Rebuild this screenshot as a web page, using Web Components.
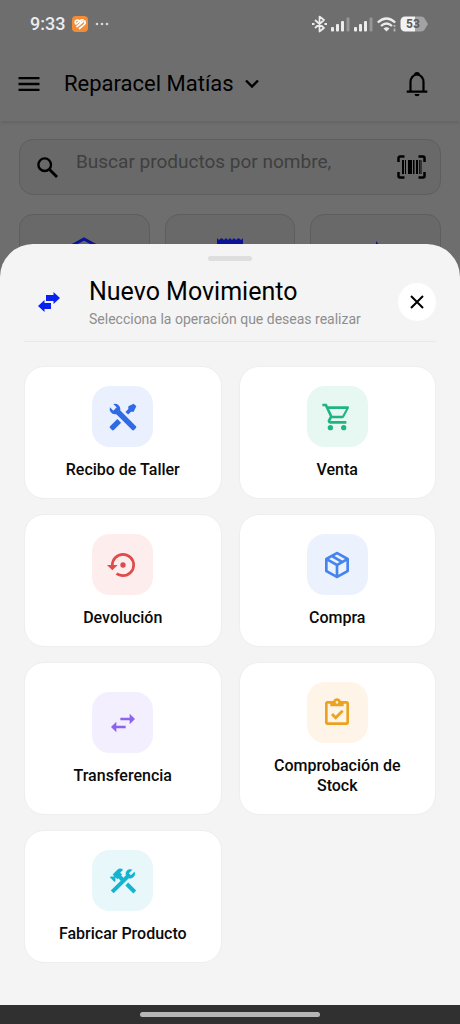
<!DOCTYPE html>
<html lang="es">
<head>
<meta charset="utf-8">
<meta name="viewport" content="width=device-width, initial-scale=1">
<title>Nuevo Movimiento</title>
<style>
html,body{margin:0;height:100%;background:#6e6e6e}
body{font-family:Roboto,"Liberation Sans",sans-serif;color:#000;overflow:hidden}
</style>
</head>
<body>
<movement-app></movement-app>
<script>
const define = (name, markup) => {
  const tpl = document.createElement('template');
  tpl.innerHTML = markup;
  customElements.define(name, class extends HTMLElement {
    constructor() {
      super();
      this.attachShadow({mode: 'open'}).appendChild(tpl.content.cloneNode(true));
    }
  });
};

/* System status bar */
define('status-bar', `
<style>
:host{display:flex;align-items:center;justify-content:space-between;height:46px;padding:2px 32px 0 30px;box-sizing:border-box;color:#ececec}
div{display:flex;align-items:center}
.l{gap:7px}.r{gap:4px}
time{font-size:18px;line-height:20px;font-weight:500}
svg{display:block}
.bat{position:relative;display:block}
.bat span{position:absolute;inset:0;width:26px;text-align:center;font-size:12px;line-height:16px;font-weight:700;color:#5a5a5a}
</style>
<div class="l">
  <time>9:33</time>
  <svg width="16" height="16" viewBox="0 0 16 16"><rect width="16" height="16" rx="4" fill="#f28c36"/><g fill="none" stroke="#fff" stroke-width="1.700" stroke-linecap="round"><path d="M8.500 6L6.500 4.200Q4.500 3.500 3.300 5.300Q2.800 7 4 8L8 4.800Q9.500 3.500 11 3.800M5 10.500L11 5.500M7.500 12.500L12.500 8.300Q13.700 6.500 12.800 5"/></g></svg>
  <svg width="14" height="4" viewBox="0 0 14 4" fill="#d8d8d8"><circle cx="2" cy="2" r="1.300"/><circle cx="7" cy="2" r="1.300"/><circle cx="12" cy="2" r="1.300"/></svg>
</div>
<div class="r">
  <svg width="15" height="18" viewBox="0 0 15 18" fill="none" stroke="#ececec" stroke-width="1.700" stroke-linejoin="round"><path d="M3 5l9 8-4.500 3.500v-15L12 5l-9 8"/><path d="M0 9h2.500M12.500 9H15" stroke-width="2"/></svg>
  <svg width="19" height="15" viewBox="0 0 19 15" fill="#ececec"><rect y="10" width="3" height="4.500" rx="1"/><rect x="5" y="7" width="3" height="7.500" rx="1"/><rect x="10" y="4" width="3" height="10.500" rx="1"/><rect x="15.500" y="0.500" width="3" height="14" rx="1" fill="#969696"/></svg>
  <svg width="19" height="15" viewBox="0 0 19 15" fill="#ececec"><rect y="10" width="3" height="4.500" rx="1"/><rect x="5" y="7" width="3" height="7.500" rx="1"/><rect x="10" y="4" width="3" height="10.500" rx="1"/><rect x="15.500" y="0.500" width="3" height="14" rx="1" fill="#969696"/></svg>
  <svg width="19" height="15" viewBox="0 0 19 15" fill="none" stroke="#ececec" stroke-width="2.300"><path d="M.8 5.500Q9.500-2.500 18.200 5.500M4 9Q9.500 4 15 9"/><path d="M6.500 11.500Q9.500 9 12.500 11.500L9.500 14.500z" fill="#ececec" stroke="none"/><path d="M17.500 8v2M17.500 11.500v3" stroke="#b4b4b4" stroke-width="1.800"/></svg>
  <div class="bat"><svg width="28" height="16" viewBox="0 0 28 16"><path d="M5 .5h10v15H5a4.500 4.500 0 0 1-4.500-4.500V5A4.500 4.500 0 0 1 5 .5z" fill="#f2f2f2"/><path d="M15 .5h6q3 0 4.200 3L28 8l-2.800 4.500q-1.200 3-4.200 3h-6z" fill="#a2a2a2"/></svg><span>53</span></div>
</div>`);

/* Title bar with menu, store picker and alerts */
define('app-bar', `
<style>
:host{display:flex;align-items:center;height:75px;box-sizing:border-box;padding:0 32px 0 15px;background:#6e6e6e;box-shadow:0 3px 3px -1px #646464}
button{display:flex;align-items:center;border:0;background:none;padding:0;font:inherit;color:#000}
.store{font-size:22px;line-height:28px;gap:11px;margin-left:21px}
.bell{margin-left:auto}
svg{display:block}
</style>
<button aria-label="Menú"><svg width="28" height="28" viewBox="0 0 24 24"><path d="M3 6h18v2H3zm0 5h18v2H3zm0 5h18v2H3z"/></svg></button>
<button class="store"><span><slot></slot></span><svg width="14" height="10" viewBox="0 0 14 10" fill="none" stroke="#000" stroke-width="2.400"><path d="M1 1.500l6 6 6-6"/></svg></button>
<button class="bell" aria-label="Notificaciones"><svg width="22" height="26" viewBox="0 0 22 26"><path d="M4.500 20V11a6.500 7.500 0 0 1 13 0v9M.7 20.700h20.600" fill="none" stroke="#000" stroke-width="2.200"/><path d="M8 4.200a3 3.200 0 0 1 6 0zM8.500 23h5a2.500 2.200 0 0 1-5 0z"/></svg></button>`);

define('search-box', `
<style>
:host{display:flex;align-items:center;height:56px;box-sizing:border-box;border:1px solid #5e5e5e;border-radius:14px;background:#696969;padding:0 14px 0 17px}
input{flex:1;min-width:0;height:54px;box-sizing:border-box;border:0;outline:0;background:none;margin:0 8px 0 18px;padding:0 0 12px;font:inherit;font-size:19px;color:#000}
input::placeholder{color:#3f3f3f;opacity:1}
button{border:0;background:none;padding:0}
svg{display:block}
</style>
<svg width="21" height="21" viewBox="0 0 21 21" fill="none" stroke="#000" stroke-width="2.400"><circle cx="7.700" cy="7.700" r="6.300"/><path d="M12.500 12.500l7.500 7.500" stroke-width="2.800"/></svg>
<input type="text" aria-label="Buscar productos" placeholder="Buscar productos por nombre,">
<button aria-label="Escanear código"><svg width="29" height="24" viewBox="0 0 29 24"><path d="M1.500 7V3a1.500 1.500 0 0 1 1.500-1.500h4.500M21.500 1.500H26A1.500 1.500 0 0 1 27.500 3v4M27.500 17v4a1.500 1.500 0 0 1-1.500 1.500h-4.500M7.500 22.500H3A1.500 1.500 0 0 1 1.500 21v-4" fill="none" stroke="#000" stroke-width="2.500"/><path d="M5 5h2v14H5zM8 5h1v14H8zM11 5h4v14h-4zM16 5h1.500v14H16zM19 5h2v14h-2zM22 5h.8v14H22zM23.500 5h1v14h-1z"/></svg></button>`);

define('shortcut-card', `
<style>
:host{display:flex;justify-content:center;height:130px;box-sizing:border-box;padding-top:22px;border:1px solid #5e5e5e;border-radius:14px;background:#696969;color:#0a1496}
</style><slot></slot>`);

/* One operation tile */
define('operation-card', `
<style>
:host{display:flex}
button{flex:1;min-width:0;display:flex;flex-direction:column;align-items:center;justify-content:center;gap:13px;padding:19px 20px 18px;border:1px solid #eeeeee;border-radius:20px;background:#fff;font:inherit;font-size:16px;line-height:20px;font-weight:500;color:#0a0a0a;text-align:center}
.tile{display:grid;place-items:center;width:61px;height:61px;border-radius:18px;background:var(--tint);color:var(--ink)}
</style>
<button><span class="tile"><slot name="icon"></slot></span><span><slot></slot></span></button>`);

define('sheet-header', `
<style>
:host{display:flex;align-items:center;height:56px;padding-bottom:11px;border-bottom:1px solid #e9e9e9}
.ico{flex:none;margin:0 28px 0 13px}
.t{flex:1;min-width:0;padding-top:2px}
h1{margin:0;font-size:25px;line-height:32px;font-weight:400}
p{margin:0;font-size:14px;line-height:22px;color:#8e8e8e;white-space:nowrap}
button{flex:none;display:grid;place-items:center;width:38px;height:38px;border:0;border-radius:50%;background:#fff;padding:0}
svg{display:block}
</style>
<svg class="ico" width="24" height="22" viewBox="0 0 24 22" fill="#0a22f0"><path d="M16.500 1l6.500 6-6.500 6v-3H9V4h7.500zM7.500 9v3H14v6H7.500v3L1 15z"/></svg>
<div class="t"><h1><slot></slot></h1><p><slot name="hint"></slot></p></div>
<button aria-label="Cerrar"><svg width="14" height="14" viewBox="0 0 14 14" fill="none" stroke="#000" stroke-width="2"><path d="M1 1l12 12M13 1L1 13"/></svg></button>`);

/* Bottom sheet that lies over the page */
define('bottom-sheet', `
<style>
:host{display:block;background:#f4f4f4;border-radius:33px 33px 0 0;padding:12px 24px 42px}
.grip{width:44px;height:5px;border-radius:3px;background:#dedede;margin:0 auto 13px}
.grid{display:grid;grid-template-columns:1fr 1fr;gap:15px 17px;margin-top:24px}
</style>
<div class="grip"></div>
<slot name="header"></slot>
<div class="grid"><slot></slot></div>`);

define('gesture-bar', `
<style>
:host{display:flex;align-items:center;justify-content:center;height:19px;background:#303030}
i{width:39%;height:5px;border-radius:3px;background:#b6b6b6}
</style><i></i>`);

const icon = (d) => `<svg slot="icon" width="32" height="32" viewBox="0 0 24 24" fill="currentColor" style="display:block"><path d="${d}"/></svg>`;

define('movement-app', `
<style>
:host{display:block;min-height:100vh}
main{padding:18px 19px;display:grid;gap:19px}
.cards{display:grid;grid-template-columns:repeat(3,1fr);gap:15px}
.over{position:fixed;left:0;right:0;bottom:0}
</style>
<status-bar></status-bar>
<app-bar>Reparacel Matías</app-bar>
<main>
  <search-box></search-box>
  <div class="cards">
    <shortcut-card><svg width="30" height="30" viewBox="0 0 30 30" fill="none" stroke="currentColor" stroke-width="3"><path d="M3 8.500l12-6.500 12 6.500-12 6.500zM3 8.500v14l12 6.500 12-6.500v-14"/></svg></shortcut-card>
    <shortcut-card><svg width="26" height="30" viewBox="0 0 26 30" fill="currentColor"><path d="M0 1l2 2 2.500-2L7 3l2-2 2 2 2-2 2 2 2-2 2 2 2.500-2L24 3l2-2v29H0z"/></svg></shortcut-card>
    <shortcut-card><svg width="30" height="30" viewBox="0 0 30 30" fill="currentColor"><path d="M15 4l3 4h-2v20h-3V7h2z"/></svg></shortcut-card>
  </div>
</main>
<div class="over">
  <bottom-sheet>
    <sheet-header slot="header">Nuevo Movimiento<span slot="hint">Selecciona la operación que deseas realizar</span></sheet-header>
    <operation-card style="--tint:#eaf0fd;--ink:#2f6be6">${icon('M21.71 20.29L20.29 21.71A1 1 0 0 1 18.88 21.71L7 9.85A3.81 3.81 0 0 1 6 10A4 4 0 0 1 2.22 4.7L4.76 7.24L5.29 6.71L6.71 5.29L7.24 4.76L4.7 2.22A4 4 0 0 1 10 6A3.81 3.81 0 0 1 9.85 7L21.71 18.88A1 1 0 0 1 21.71 20.29M2.29 18.88A1 1 0 0 0 2.29 20.29L3.71 21.71A1 1 0 0 0 5.12 21.71L10.59 16.25L7.76 13.42M20 2L16 4V6L13.83 8.17L15.83 10.17L18 8H20L22 4Z')}Recibo de Taller</operation-card>
    <operation-card style="--tint:#e7f7f1;--ink:#1fb582">${icon('M17 18A2 2 0 0 1 19 20A2 2 0 0 1 17 22C15.89 22 15 21.1 15 20C15 18.89 15.89 18 17 18M1 2H4.27L5.21 4H20A1 1 0 0 1 21 5C21 5.17 20.95 5.34 20.88 5.5L17.3 11.97C16.96 12.58 16.3 13 15.55 13H8.1L7.2 14.63L7.17 14.75A.25 .25 0 0 0 7.42 15H19V17H7C5.89 17 5 16.1 5 15C5 14.65 5.09 14.32 5.24 14.04L6.6 11.59L3 4H1V2M7 18A2 2 0 0 1 9 20A2 2 0 0 1 7 22C5.89 22 5 21.1 5 20C5 18.89 5.89 18 7 18M16 11L18.78 6H6.14L8.5 11H16Z')}Venta</operation-card>
    <operation-card style="--tint:#fdeded;--ink:#e04a4a">${icon('M12 3A9 9 0 0 0 3 12H0L4 16L8 12H5A7 7 0 0 1 12 5A7 7 0 0 1 19 12A7 7 0 0 1 12 19C10.5 19 9.09 18.5 7.94 17.7L6.5 19.14C8.04 20.3 9.94 21 12 21A9 9 0 0 0 21 12A9 9 0 0 0 12 3M14 12A2 2 0 0 0 12 10A2 2 0 0 0 10 12A2 2 0 0 0 12 14A2 2 0 0 0 14 12Z')}Devolución</operation-card>
    <operation-card style="--tint:#ebf2fe;--ink:#4384ee">${icon('M21 16.5C21 16.88 20.79 17.21 20.47 17.38L12.57 21.82C12.41 21.94 12.21 22 12 22C11.79 22 11.59 21.94 11.43 21.82L3.53 17.38C3.21 17.21 3 16.88 3 16.5V7.5C3 7.12 3.21 6.79 3.53 6.62L11.43 2.18C11.59 2.06 11.79 2 12 2C12.21 2 12.41 2.06 12.57 2.18L20.47 6.62C20.79 6.79 21 7.12 21 7.5V16.5M12 4.15L10.11 5.22L16 8.61L17.96 7.5L12 4.15M6.04 7.5L12 10.85L13.96 9.75L8.08 6.35L6.04 7.5M5 15.91L11 19.29V12.58L5 9.21V15.91M19 15.91V9.21L13 12.58V19.29L19 15.91Z')}Compra</operation-card>
    <operation-card style="--tint:#f3effe;--ink:#8b64ee">${icon('M21 9L17 5V8H10V10H17V13M7 11L3 15L7 19V16H14V14H7V11Z')}Transferencia</operation-card>
    <operation-card style="--tint:#fef5e8;--ink:#eca120">${icon('M19 3H14.82C14.4 1.84 13.3 1 12 1C10.7 1 9.6 1.84 9.18 3H5A2 2 0 0 0 3 5V19A2 2 0 0 0 5 21H19A2 2 0 0 0 21 19V5A2 2 0 0 0 19 3M12 3A1 1 0 0 1 13 4A1 1 0 0 1 12 5A1 1 0 0 1 11 4A1 1 0 0 1 12 3M7 7H17V5H19V19H5V5H7V7M7.5 13.5L9 12L11 14L15.5 9.5L17 11L11 17L7.5 13.5Z')}Comprobación de Stock</operation-card>
    <operation-card style="--tint:#e7f7fa;--ink:#12b4d2">${icon('M13.78 15.3L19.78 21.3L21.89 19.14L15.89 13.14L13.78 15.3M17.5 10.1C17.11 10.1 16.69 10.05 16.36 9.91L4.97 21.25L2.86 19.14L10.27 11.74L8.5 9.96L7.78 10.66L6.33 9.25V12.11L5.63 12.81L2.11 9.25L2.81 8.55H5.62L4.22 7.14L7.78 3.58C8.95 2.41 10.83 2.41 12 3.58L9.89 5.74L11.3 7.14L10.59 7.85L12.38 9.63L14.2 7.75C14.06 7.42 14 7 14 6.63C14 4.66 15.56 3.11 17.5 3.11C18.09 3.11 18.61 3.25 19.08 3.53L16.41 6.2L17.91 7.7L20.58 5.03C20.86 5.5 21 6 21 6.63C21 8.55 19.45 10.1 17.5 10.1Z')}Fabricar Producto</operation-card>
  </bottom-sheet>
  <gesture-bar></gesture-bar>
</div>`);
</script>
</body>
</html>
